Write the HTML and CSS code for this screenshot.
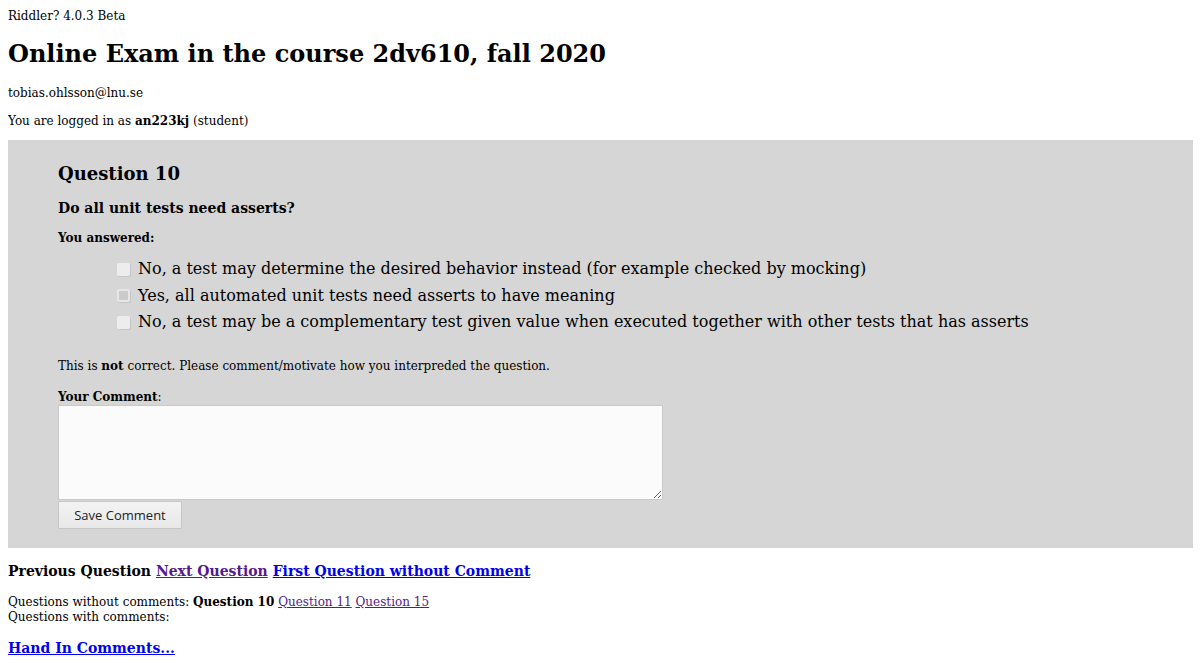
FILE: index.html
```html
<!DOCTYPE html>
<html>
<head>
<meta charset="utf-8">
<title>Riddler</title>
<link rel="stylesheet" href="styles.css">
</head>
<body>
<div class="small version">Riddler? 4.0.3 Beta</div>
<h1 class="title">Online Exam in the course 2dv610, fall 2020</h1>
<p class="small email">tobias.ohlsson@lnu.se</p>
<p class="small login">You are logged in as <b>an223kj</b> (student)</p>

<div class="panel">
  <h2 class="qtitle">Question 10</h2>
  <h3 class="qtext">Do all unit tests need asserts?</h3>
  <h4 class="answered">You answered:</h4>
  <ul class="options">
    <li><span class="cb"></span>No, a test may determine the desired behavior instead (for example checked by mocking)</li>
    <li><span class="cb checked"></span>Yes, all automated unit tests need asserts to have meaning</li>
    <li><span class="cb"></span>No, a test may be a complementary test given value when executed together with other tests that has asserts</li>
  </ul>
  <p class="small verdict">This is <b>not</b> correct. Please comment/motivate how you interpreded the question.</p>
  <div class="small label"><b>Your Comment</b>:</div>
  <textarea class="comment"></textarea>
  <div class="actions"><button class="save">Save Comment</button></div>
</div>

<div class="nav"><b>Previous Question</b> <a class="visited" href="#">Next Question</a> <a href="#">First Question without Comment</a></div>
<div class="small lists">Questions without comments: <b>Question 10</b> <a class="visited" href="#">Question 11</a> <a class="visited" href="#">Question 15</a><br>Questions with comments: </div>
<div class="handin"><a href="#">Hand In Comments...</a></div>
</body>
</html>
```
FILE: styles.css
```css
html, body {
  margin: 0;
  padding: 0;
}
body {
  margin: 8px;
  font-family: "DejaVu Serif", serif;
  color: #000;
  background: #fff;
}
.small {
  font-size: 12px;
  line-height: 15px;
}
.version {
  height: 16px;
  line-height: 16px;
}
.title {
  font-size: 24px;
  line-height: 28px;
  margin: 16px 0 0;
}
.email {
  margin: 18px 0 0;
}
.login {
  margin: 13px 0 0;
}
.panel {
  background: #d6d6d6;
  padding: 23px 50px 19px;
  margin-top: 11px;
}
.qtitle {
  font-size: 18px;
  line-height: 21px;
  margin: 0;
}
.qtext {
  font-size: 14px;
  line-height: 16px;
  margin: 16px 0 0;
}
.answered {
  font-size: 12px;
  line-height: 14px;
  margin: 15px 0 0;
}
.options {
  list-style: none;
  margin: 11px 0 0;
  padding: 0 0 0 58px;
  font-size: 16px;
  line-height: 26.5px;
}
.options li {
  display: flex;
  align-items: center;
}
.cb {
  width: 13px;
  height: 13px;
  box-sizing: border-box;
  margin: 0 8px 0 1px;
  background: #ededed;
  border-radius: 2px;
  box-shadow: 1px 1px 0 #c6c6c6;
}
.cb.checked {
  background: #cbcbcb;
  border: 2px solid #e6e6e6;
}
.verdict {
  margin: 23px 0 0;
}
.label {
  margin-top: 16px;
}
.comment {
  display: block;
  width: 605px;
  height: 95px;
  box-sizing: border-box;
  margin: 0;
  background: #fbfbfb;
  border: 1px solid #c9c9c9;
  resize: both;
}
.actions {
  margin-top: 1px;
}
.save {
  display: block;
  margin: 0;
  width: 124px;
  height: 28px;
  padding: 0;
  font-family: "Open Sans", sans-serif;
  font-size: 13px;
  color: #222;
  background: linear-gradient(#f3f3f3, #e8e8e8);
  border: 1px solid #c6c6c6;
  border-radius: 1px;
}
.nav {
  margin-top: 15px;
  font-size: 14px;
  font-weight: bold;
  line-height: 16px;
}
a {
  color: #0000ee;
}
a.visited {
  color: #551a8b;
}
.lists {
  margin-top: 16px;
}
.handin {
  margin-top: 15px;
  font-size: 14px;
  font-weight: bold;
  line-height: 16px;
}
```
